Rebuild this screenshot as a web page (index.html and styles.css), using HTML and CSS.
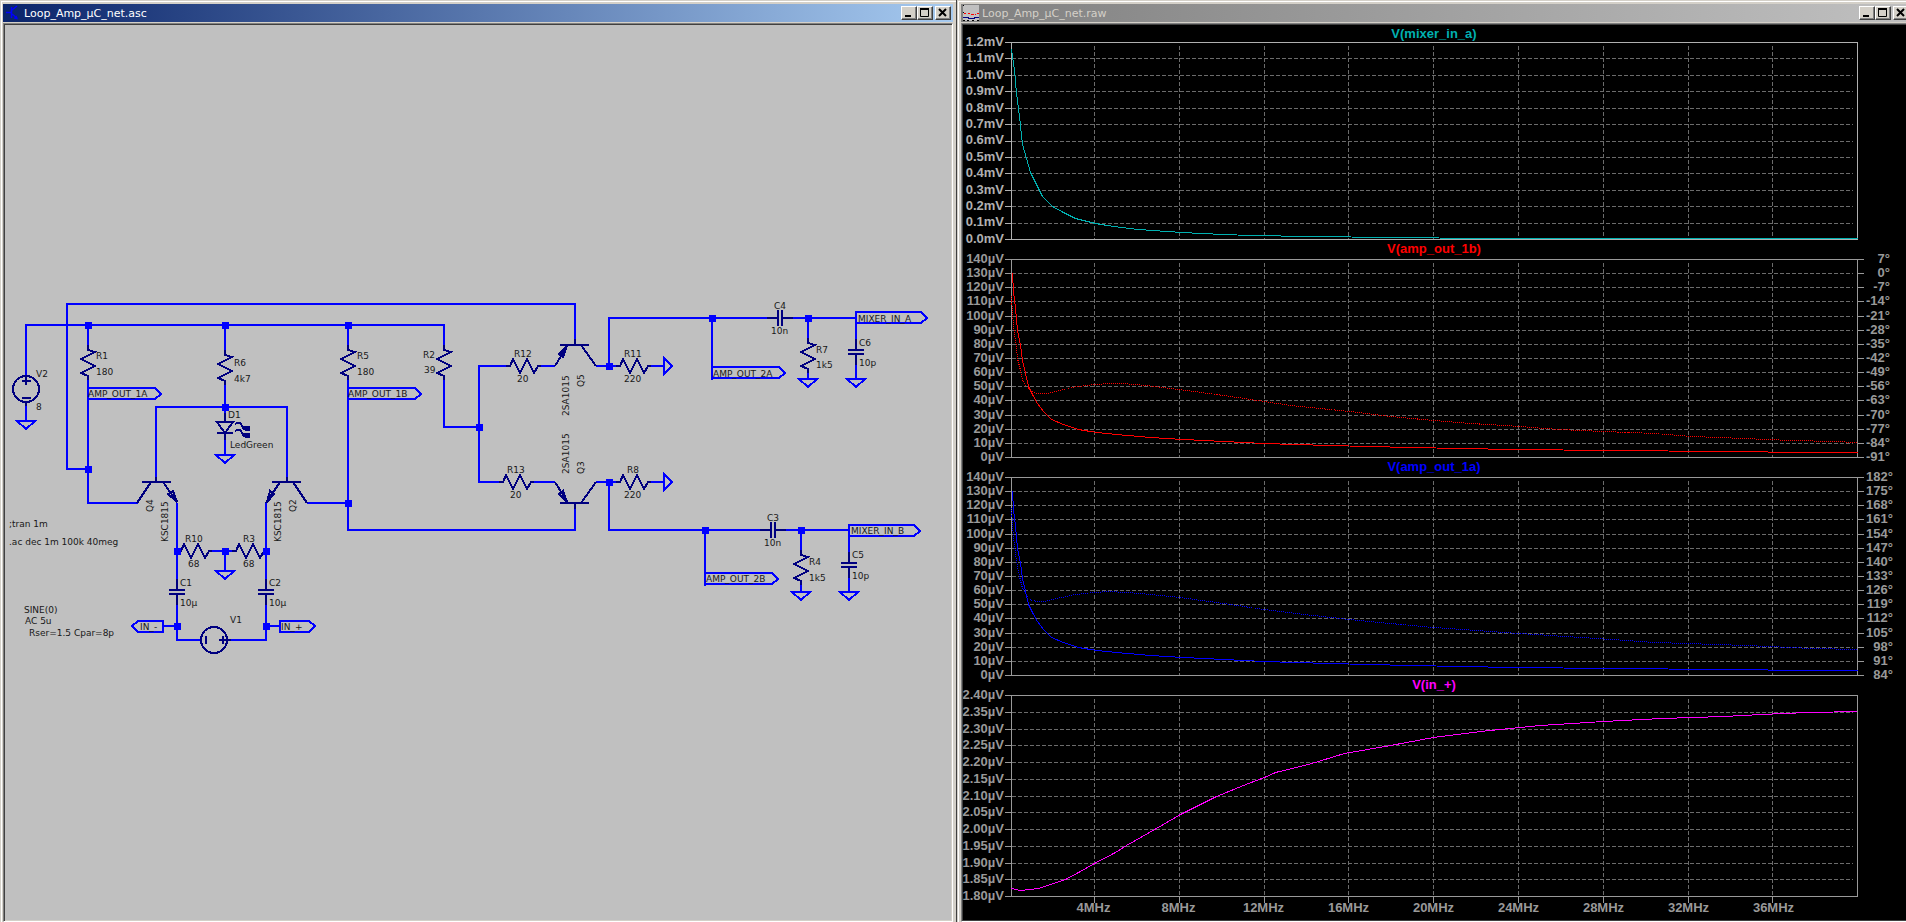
FILE: index.html
```html
<!DOCTYPE html>
<html lang="en">
<head>
<meta charset="utf-8">
<title>Loop_Amp_µC_net</title>
<link rel="stylesheet" href="styles.css">
</head>
<body>
<main class="desktop">
  <section class="window">
    <header class="titlebar titlebar-active">
      <svg class="app-icon" viewBox="0 0 16 16" aria-hidden="true"><path d="M1 7.500h5M6.500 2v11M7 5l5-4M7 9l5 4" stroke="#00f" stroke-width="1.500" fill="none"/><path d="M8.500 13.500l4.500 1-1.500-4z" fill="#00f"/></svg>
      <h1 class="title">Loop_Amp_µC_net.asc</h1>
      <div class="controls">
        <button class="control" aria-label="Minimize"><svg viewBox="0 0 12 10"><path d="M2 8h6" class="glyph"/></svg></button>
        <button class="control" aria-label="Maximize"><svg viewBox="0 0 12 10"><path d="M1 1h9" class="glyph"/><path d="M1.500 1v7.500h8V1" class="glyph-thin"/></svg></button>
        <button class="control control-close" aria-label="Close"><svg viewBox="0 0 12 10"><path d="M2 1l7 7M9 1l-7 7" class="glyph"/></svg></button>
      </div>
    </header>
    <div class="client sheet">
      <svg class="schematic" viewBox="5 25 946 895" preserveAspectRatio="xMinYMin meet" role="img" aria-label="Loop amplifier schematic">
        <defs>
          <path id="res-v" d="M0-4V1L7 3L-7 10L7 17L-7 24L0 27V31"/>
          <path id="res-h" d="M-4 0H0L3-7L10 7L17-7L24 7L28 0H31"/>
          <path id="gnd" d="M-9 0H9L0 8Z"/>
          <path id="gnd-r" d="M0-8V8L8 0Z"/>
          <path id="cap-v" d="M0-11V0M-8 0H8M-8 4H8M0 4V15"/>
          <path id="cap-h" d="M-11 0H0M0-8V8M4-8V8M4 0H15"/>
          <rect id="dot" x="-3" y="-3" width="7" height="7"/>
          <path id="flag" d="M0-6H67L73 0L67 5H0"/>
          <path id="flag-m" d="M0-6H65L71 0L65 5H0Z"/>
        </defs>
        <g class="wire">
          <path d="M26 375V325H444V349M575 340V304H67V469H88M88 325V346M88 376V503H138"/>
          <path d="M225 325V351M225 381V413M156 477V407H287V477M225 440V454M26 406V421"/>
          <path d="M348 325V346M348 376V530H575V509M307 503H348M444 376V427H479M507 366H479V482H500"/>
          <path d="M541 366H555M534 482H555M596 366H617M596 482H617M651 366H664M651 482H664"/>
          <path d="M609 366V318H767M793 318H856V340M712 318V380M808 318V339M808 372V379M856 365V379"/>
          <path d="M609 482V530H762M786 530H849V552M705 530V586M801 530V551M801 584V592M849 577V592"/>
          <path d="M177 503V580M177 605V640H201M266 503V580M266 605V640H227M212 551H233M225 551V571M163 626H177M266 626H280"/>
          <use href="#gnd" x="26" y="421"/><use href="#gnd" x="225" y="455"/><use href="#gnd" x="225" y="571"/>
          <use href="#gnd" x="808" y="379"/><use href="#gnd" x="856" y="379"/><use href="#gnd" x="801" y="592"/><use href="#gnd" x="849" y="592"/>
          <use href="#gnd-r" x="664" y="366"/><use href="#gnd-r" x="664" y="482"/>
          <use href="#flag" x="88" y="394"/><use href="#flag" x="348" y="394"/><use href="#flag" x="712" y="373"/><use href="#flag" x="705" y="579"/>
          <use href="#flag-m" x="856" y="318"/><use href="#flag-m" x="849" y="531"/>
          <path d="M163 621H138L132 626L138 632H163ZM280 621H309L315 626L309 632H280Z"/>
        </g>
        <g class="part">
          <use href="#res-v" x="88" y="349"/><use href="#res-v" x="225" y="354"/><use href="#res-v" x="348" y="349"/><use href="#res-v" x="444" y="349"/>
          <use href="#res-v" x="808" y="342"/><use href="#res-v" x="801" y="554"/>
          <use href="#res-h" x="510" y="366"/><use href="#res-h" x="503" y="482"/><use href="#res-h" x="620" y="366"/><use href="#res-h" x="620" y="482"/>
          <use href="#res-h" x="181" y="551"/><use href="#res-h" x="236" y="551"/>
          <use href="#cap-v" x="177" y="590"/><use href="#cap-v" x="266" y="590"/><use href="#cap-v" x="856" y="350"/><use href="#cap-v" x="849" y="563"/>
          <use href="#cap-h" x="778" y="318"/><use href="#cap-h" x="771" y="530"/>
          <circle cx="26" cy="389" r="13"/><path d="M22 381H31M26 375V385M22 398H31M26 402V406"/>
          <circle cx="214" cy="640" r="13"/><path d="M206 636V644M219 640H231M223 636V644"/>
          <path d="M225 413V422M217 422H233L225 433ZM217 433H233M225 433V440"/>
          <path d="M235 424L237 423H240L243 427M235 431L237 430H240L243 434"/><path class="led-head" d="M242 426H250V431H246L242 429ZM242 433H250V438H246L242 436Z"/>
          <path d="M156 477V482M142 482H171M151 482L137 503M163 482L177 502M168 494L173 491L177 502Z"/>
          <path d="M287 477V482M272 482H301M293 482L307 503M280 482L266 503M274 494L270 491L267 502Z"/>
          <path d="M575 339V345M560 345H589M581 345L596 366M567 346L555 366M567 346L559 354L563 357Z"/>
          <path d="M575 509V503M560 503H589M581 503L596 482M568 503L555 482M567 502L559 494L563 491Z"/>
        </g>
        <g class="joint">
          <use href="#dot" x="88" y="325"/><use href="#dot" x="225" y="325"/><use href="#dot" x="348" y="325"/><use href="#dot" x="225" y="407"/>
          <use href="#dot" x="88" y="469"/><use href="#dot" x="348" y="503"/><use href="#dot" x="479" y="427"/><use href="#dot" x="609" y="366"/>
          <use href="#dot" x="609" y="482"/><use href="#dot" x="712" y="318"/><use href="#dot" x="808" y="318"/><use href="#dot" x="705" y="530"/>
          <use href="#dot" x="801" y="530"/><use href="#dot" x="177" y="551"/><use href="#dot" x="225" y="551"/><use href="#dot" x="266" y="551"/>
          <use href="#dot" x="177" y="626"/><use href="#dot" x="266" y="626"/>
        </g>
        <g class="note">
          <text x="36" y="377">V2</text><text x="36" y="410">8</text>
          <text x="96" y="359">R1</text><text x="96" y="375">180</text>
          <text x="234" y="366">R6</text><text x="234" y="382">4k7</text>
          <text x="357" y="359">R5</text><text x="357" y="375">180</text>
          <text x="423" y="358">R2</text><text x="424" y="373">39</text>
          <text x="228" y="418">D1</text><text x="230" y="448">LedGreen</text>
          <text x="514" y="357">R12</text><text x="517" y="382">20</text>
          <text x="507" y="473">R13</text><text x="510" y="498">20</text>
          <text x="624" y="357">R11</text><text x="624" y="382">220</text>
          <text x="627" y="473">R8</text><text x="624" y="498">220</text>
          <text x="774" y="309">C4</text><text x="771" y="334">10n</text>
          <text x="816" y="353">R7</text><text x="816" y="368">1k5</text>
          <text x="859" y="346">C6</text><text x="859" y="366">10p</text>
          <text x="767" y="521">C3</text><text x="764" y="546">10n</text>
          <text x="809" y="565">R4</text><text x="809" y="581">1k5</text>
          <text x="852" y="558">C5</text><text x="852" y="579">10p</text>
          <text x="185" y="542">R10</text><text x="188" y="567">68</text>
          <text x="243" y="542">R3</text><text x="243" y="567">68</text>
          <text x="180" y="586">C1</text><text x="180" y="606">10µ</text>
          <text x="269" y="586">C2</text><text x="269" y="606">10µ</text>
          <text x="230" y="623">V1</text>
          <text x="88" y="397">AMP_OUT_1A</text><text x="348" y="397">AMP_OUT_1B</text>
          <text x="713" y="377">AMP_OUT_2A</text><text x="706" y="582">AMP_OUT_2B</text>
          <text x="858" y="322">MIXER_IN_A</text><text x="851" y="534">MIXER_IN_B</text>
          <text x="140" y="630">IN_-</text><text x="281" y="630">IN_+</text>
          <text transform="translate(153 512) rotate(-90)">Q4</text><text transform="translate(168 542) rotate(-90)">KSC1815</text>
          <text transform="translate(296 512) rotate(-90)">Q2</text><text transform="translate(281 542) rotate(-90)">KSC1815</text>
          <text transform="translate(584 387) rotate(-90)">Q5</text><text transform="translate(569 416) rotate(-90)">2SA1015</text>
          <text transform="translate(584 474) rotate(-90)">Q3</text><text transform="translate(569 474) rotate(-90)">2SA1015</text>
          <text x="9" y="527">;tran 1m</text>
          <text x="9" y="545">.ac dec 1m 100k 40meg</text>
          <text x="24" y="613">SINE(0)</text><text x="25" y="624">AC 5u</text><text x="29" y="636">Rser=1.5 Cpar=8p</text>
        </g>
      </svg>
    </div>
  </section>

  <section class="window window-right">
    <header class="titlebar">
      <svg class="app-icon" viewBox="0 0 16 16" aria-hidden="true" shape-rendering="crispEdges"><path d="M0 0h16v16H0z" fill="#c0c0c0"/><path d="M1 8.500h2m2 0h2m1 1h3m1 0h1m1-1h2" stroke="red"/><path d="M0 12.500h5v1h6v-1h5" stroke="#000080" fill="none"/><path d="M0 .5h1M0 7.500h1M0 15.500h2m2 0h2m3 0h2m3 0h2" stroke="#000"/></svg>
      <h1 class="title">Loop_Amp_µC_net.raw</h1>
      <div class="controls">
        <button class="control" aria-label="Minimize"><svg viewBox="0 0 12 10"><path d="M2 8h6" class="glyph"/></svg></button>
        <button class="control" aria-label="Maximize"><svg viewBox="0 0 12 10"><path d="M1 1h9" class="glyph"/><path d="M1.500 1v7.500h8V1" class="glyph-thin"/></svg></button>
        <button class="control control-close" aria-label="Close"><svg viewBox="0 0 12 10"><path d="M2 1l7 7M9 1l-7 7" class="glyph"/></svg></button>
      </div>
    </header>
    <div class="client plots" id="plots"></div>
  </section>
</main>
<script src="plots.js"></script>
</body>
</html>
```

FILE: styles.css
```css
* { box-sizing: border-box; }

body {
  margin: 0;
  overflow: hidden;
  background: #d4d0c8;
  font-family: "DejaVu Sans", sans-serif;
}

.desktop {
  display: grid;
  grid-template-columns: 957fr 949fr;
  grid-template-rows: minmax(0, 1fr);
  height: 100vh;
}

/* Window chrome */
.window {
  display: flex;
  flex-direction: column;
  gap: 1px;
  min-width: 0;
  min-height: 0;
  padding: 4px 3px 0;
  background: #d4d0c8;
  border-right: 1px solid #404040;
  box-shadow: inset 1px 1px #d4d0c8, inset 2px 2px #fff;
}

.window-right {
  margin-right: -9px;
  padding-left: 4px;
}

.titlebar {
  display: flex;
  align-items: center;
  gap: 3px;
  flex: none;
  height: 18px;
  padding: 0 2px;
  background: linear-gradient(to right, #808080, #c0c0c0);
  color: #d4d0c8;
}

.titlebar-active {
  background: linear-gradient(to right, #0a246a, #a6caf0);
  color: #fff;
}

.app-icon {
  width: 16px;
  height: 16px;
}

.title {
  flex: 1;
  margin: 0;
  padding-top: 2px;
  font-size: 11px;
  font-weight: normal;
  line-height: 18px;
}

.controls { display: flex; }

.control {
  display: flex;
  width: 16px;
  height: 14px;
  padding: 1px;
  background: #d4d0c8;
  border: 1px solid;
  border-color: #fff #404040 #404040 #fff;
  box-shadow: inset -1px -1px #808080;
}

.control svg {
  width: 12px;
  height: 10px;
}

.control-close { margin-left: 2px; }

.glyph {
  fill: none;
  stroke: #000;
  stroke-width: 2;
}

.glyph-thin {
  fill: none;
  stroke: #000;
}

.client {
  flex: 1;
  min-height: 0;
  border: 1px solid;
  border-color: #808080 #fff #fff #808080;
  outline: 1px solid #404040;
  outline-offset: -2px;
  padding: 1px;
}

/* Schematic */
.sheet {
  background: #c0c0c0;
  outline: none;
  box-shadow: inset 1px 1px #404040, inset -1px -1px #d4d0c8;
}

.schematic {
  display: block;
  width: 100%;
  height: 100%;
  shape-rendering: crispEdges;
}

.wire {
  fill: none;
  stroke: #00f;
  stroke-width: 2;
}

.part {
  fill: none;
  stroke: #000080;
  stroke-width: 2;
}

.led-head {
  fill: #000080;
  stroke: none;
}

.joint { fill: #00f; }

.note {
  fill: #181818;
  font-size: 9px;
}

/* Plot panes */
.plots {
  display: grid;
  grid-template-columns: 48px 1fr 52px;
  grid-template-rows:
    17px minmax(0, 197fr)
    20px minmax(0, 198fr)
    20px minmax(0, 198fr)
    20px minmax(0, 201fr)
    24px;
  background: #000;
  color: #999;
  font: bold 13px/16px "Liberation Sans", Arial, sans-serif;
}

.trace-name {
  grid-column: 2;
  place-self: center;
}

.axis {
  display: flex;
  flex-direction: column;
  justify-content: space-between;
  align-items: flex-end;
  min-height: 0;
  margin: -8px 0;
}

.axis span {
  flex: 0 0 16px;
  margin-bottom: -4px;
}

.axis span:last-child { margin-bottom: 0; }

.axis-left { padding-right: 7px; }

.axis-right {
  justify-self: start;
  padding-left: 9px;
}

.bright { color: #b0b0b0; }

.axis-x {
  grid-column: 2;
  display: grid;
  grid-template-columns: 40fr repeat(9, 85fr) 41fr;
  align-items: center;
  text-align: center;
}

.axis-x span:first-child { grid-column: 2; }

.plot {
  grid-column: 2;
  display: block;
  width: 100%;
  height: 100%;
  min-height: 0;
  overflow: visible;
  shape-rendering: crispEdges;
}

.plot path {
  fill: none;
  vector-effect: non-scaling-stroke;
}

.plot .frame { stroke: #999; }
.plot.bright .frame { stroke: #b0b0b0; }

.plot .grid-lines {
  stroke: #6b6b6b;
  stroke-dasharray: 4 2;
}

.plot .trace { stroke: currentColor; }
.plot .phase { stroke-dasharray: 1 1; }

.teal { color: #00b0b0; }
.red { color: #f00; }
.blue { color: #00f; }
.magenta { color: #f0f; }
```

FILE: plots.js
```js
const PLOT_WIDTH = 846;
const GRID_X = [83, 168, 253, 337, 422, 507, 592, 677, 761];

const range = (from, step, count, format) =>
  Array.from({ length: count }, (_, i) => format(from + step * i));
const microvolts = range(140, -10, 15, v => `${v}µV`);

const panes = [
  {
    name: 'V(mixer_in_a)', color: 'teal', height: 197, bright: true,
    left: range(1.2, -0.1, 13, v => `${Math.abs(v).toFixed(1)}mV`),
    magnitude: '0,7 3,28 5,51 8,74 11,102 15,116 19,130 25,142 31,154 41,164 52,170 64,176 84,181 102,184 127,187 155,189 189,191 238,193 300,194 378,195 476,196 846,196'
  },
  {
    name: 'V(amp_out_1b)', color: 'red', height: 198,
    left: microvolts,
    right: range(7, -7, 15, v => `${v}°`),
    magnitude: '0,14 1,14 2,32 4,49 6,71 9,86 11,101 14,114 17,127 21,135 26,144 32,152 40,160 52,165 67,170 85,173 105,175 139,178 172,180 212,182 253,184 283,185 356,187 400,188 449,189 503,190 600,191 712,192 799,193 846,193',
    phase: '0,37 1,56 3,74 5,87 6,99 9,111 11,120 15,127 20,132 26,134 35,134 45,132 60,128 82,125 99,124 110,124 135,126 168,130 205,135 253,142 279,146 338,152 379,157 422,161 460,164 508,167 547,170 592,172 644,174 680,177 732,179 779,181 823,182 846,183'
  },
  {
    name: 'V(amp_out_1a)', color: 'blue', height: 198,
    left: microvolts,
    right: range(182, -7, 15, v => `${v}°`),
    magnitude: '0,14 1,14 2,32 4,49 6,71 9,86 11,101 14,114 17,127 21,135 26,144 32,152 40,160 52,165 67,170 85,173 105,175 139,178 172,180 212,182 253,184 283,185 356,187 400,188 449,189 503,190 600,191 712,192 799,193 846,193',
    phase: '0,31 1,49 3,69 5,84 8,99 11,111 16,119 20,123 27,124 34,124 45,121 64,117 82,115 97,114 115,115 139,117 168,120 205,125 253,132 284,136 338,142 379,146 422,150 478,154 508,156 585,161 644,165 706,167 758,169 801,171 846,172'
  },
  {
    name: 'V(in_+)', color: 'magenta', height: 201,
    left: range(2.4, -0.05, 13, v => `${v.toFixed(2)}µV`),
    magnitude: '0,193 9,195 19,194 27,193 39,189 54,184 67,177 83,168 104,157 115,150 145,133 169,119 205,101 237,88 253,82 264,77 297,69 333,58 379,50 422,42 469,36 499,33 529,30 592,26 650,23 712,21 770,18 799,17 846,16'
  }
];

function tracePath(points, extra) {
  const d = 'M' + points.split(' ').map(p => p.split(',').map(n => +n + 0.5).join(' ')).join('L');
  return `<path class="trace ${extra}" d="${d}"/>`;
}

function drawPane(pane, last) {
  const steps = pane.left.length - 1;
  const ys = pane.left.map((_, i) => Math.round(pane.height * i / steps) + 0.5);
  const xs = GRID_X.map(x => x + 0.5);
  const h = pane.height;

  let grid = ys.slice(1, -1).map(y => `M1 ${y}H842`).join('');
  grid += xs.map(x => `M${x} 4V${h}`).join('');

  let frame = `M.5 .5H${PLOT_WIDTH + 0.5}V${h + 0.5}H.5Z`;
  frame += ys.map(y => `M-6 ${y}H0`).join('');
  if (pane.right) frame += ys.map(y => `M${PLOT_WIDTH} ${y}h7`).join('');
  if (last) frame += xs.map(x => `M${x} ${h}v7`).join('');

  const row = n => `style="grid-row:${n}"`;
  const top = panes.indexOf(pane) * 2 + 1;
  const labels = list => list.map(t => `<span>${t}</span>`).join('');
  const tone = pane.bright ? 'bright' : '';

  return `
    <div class="trace-name ${pane.color}" ${row(top)}>${pane.name}</div>
    <div class="axis axis-left ${tone}" ${row(top + 1)}>${labels(pane.left)}</div>
    <svg class="plot ${tone}" ${row(top + 1)} viewBox="0 0 ${PLOT_WIDTH} ${h}" preserveAspectRatio="none">
      <path class="grid-lines" d="${grid}"/>
      <path class="frame" d="${frame}"/>
      <g class="${pane.color}">${tracePath(pane.magnitude, '')}${pane.phase ? tracePath(pane.phase, 'phase') : ''}</g>
    </svg>
    ${pane.right ? `<div class="axis axis-right" ${row(top + 1)}>${labels(pane.right)}</div>` : ''}`;
}

document.getElementById('plots').innerHTML =
  panes.map((p, i) => drawPane(p, i === panes.length - 1)).join('') +
  `<div class="axis-x">${range(4, 4, 9, v => `<span>${v}MHz</span>`).join('')}</div>`;
```
